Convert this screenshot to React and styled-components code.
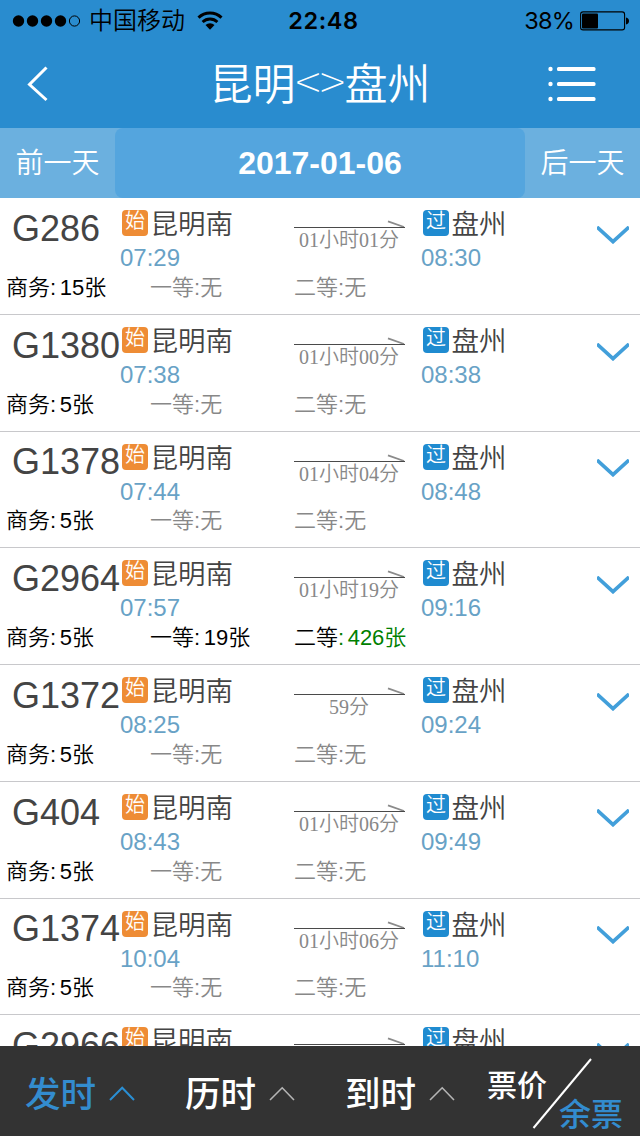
import React from 'react'
import styled, { createGlobalStyle } from 'styled-components'

const trains = [
  { no: 'G286', start: '07:29', end: '08:30', time: '01小时01分', business: '15' },
  { no: 'G1380', start: '07:38', end: '08:38', time: '01小时00分', business: '5' },
  { no: 'G1378', start: '07:44', end: '08:48', time: '01小时04分', business: '5' },
  { no: 'G2964', start: '07:57', end: '09:16', time: '01小时19分', business: '5', first: '19', second: '426' },
  { no: 'G1372', start: '08:25', end: '09:24', time: '59分', business: '5' },
  { no: 'G404', start: '08:43', end: '09:49', time: '01小时06分', business: '5' },
  { no: 'G1374', start: '10:04', end: '11:10', time: '01小时06分', business: '5' },
  { no: 'G2966' },
]

const Seat = ({ label, count, plenty }) => (
  <SeatCell $empty={!count}>
    {label}
    <SeatCount $plenty={plenty}>
      :{count ? <Num>{count}张</Num> : '无'}
    </SeatCount>
  </SeatCell>
)

const Train = ({ train }) => (
  <Row>
    <Trip>
      <TrainNo>{train.no}</TrainNo>
      <Stop $width={174}>
        <Station><Badge $color="#ee8c35">始</Badge>昆明南</Station>
        {train.start && <Time>{train.start}</Time>}
      </Stop>
      <Duration>
        <svg width="111" height="31" viewBox="0 0 111 31">
          <path d="M94 23.3L110 29" stroke="#8a8a8a" strokeWidth="1.8" fill="none" />
          <path d="M0 29.5H111" stroke="#4a4a4a" strokeWidth="1.2" />
        </svg>
        {train.time && <span>{train.time}</span>}
      </Duration>
      <Stop $width={176}>
        <Station><Badge $color="#1f8bd0">过</Badge>盘州</Station>
        {train.end && <Time>{train.end}</Time>}
      </Stop>
      <Expand width="32" height="18" viewBox="0 0 32 18">
        <path d="M0 1L16 15.7L32 1" stroke="#429fda" strokeWidth="3.6" fill="none" />
      </Expand>
    </Trip>
    {train.business && (
      <Seats>
        <Seat label="商务" count={train.business} />
        <Seat label="一等" count={train.first} />
        <Seat label="二等" count={train.second} plenty={!!train.second} />
      </Seats>
    )}
  </Row>
)

const SortTab = ({ text, active }) => (
  <Tab $active={active}>
    <span>{text}</span>
    <svg width="26" height="15" viewBox="0 0 26 15">
      <path d="M1 14L13.2 1.8L25 14" stroke={active ? '#2a8fd4' : '#b5b5b5'} strokeWidth={active ? 2 : 1.6} fill="none" />
    </svg>
  </Tab>
)

const App = () => (
  <Screen>
    <GlobalStyle />
    <StatusBar>
      <Carrier>
        <svg width="69" height="14" viewBox="0 0 69 14">
          <circle cx="6.5" cy="7" r="5.7" />
          <circle cx="20.5" cy="7" r="5.7" />
          <circle cx="34.5" cy="7" r="5.7" />
          <circle cx="48.5" cy="7" r="5.7" />
          <circle cx="62.5" cy="7" r="5.1" fill="none" stroke="#000" strokeWidth="1" />
        </svg>
        <span>中国移动</span>
        <svg width="26" height="20" viewBox="0 0 26 20">
          <path d="M1.5 6.6A16.5 16.5 0 0 1 24.5 6.6" stroke="#000" strokeWidth="3" fill="none" />
          <path d="M5.6 11A10.6 10.6 0 0 1 20.4 11" stroke="#000" strokeWidth="2.8" fill="none" />
          <path d="M8.5 14.1A6.4 6.4 0 0 1 17.5 14.1L13 18.8Z" />
        </svg>
      </Carrier>
      <Clock>22:48</Clock>
      <Battery>
        <span>38%</span>
        <svg width="50" height="20" viewBox="0 0 50 20">
          <rect x="0.6" y="0.9" width="44" height="18" rx="2.5" fill="none" stroke="#000" strokeWidth="1.1" />
          <rect x="2" y="2.5" width="16" height="15" rx="1" />
          <path d="M46 6.5Q49 7.3 49 10T46 13.5Z" />
        </svg>
      </Battery>
    </StatusBar>
    <NavBar>
      <svg width="22" height="36" viewBox="0 0 22 36">
        <path d="M19.5 1.5L2.5 18.5L19.5 34" stroke="#fff" strokeWidth="3" fill="none" />
      </svg>
      <Title>昆明<span>&lt;&gt;</span>盘州</Title>
      <svg width="48" height="36" viewBox="0 0 48 36">
        <g fill="#fff">
          <circle cx="2.5" cy="3" r="2.2" />
          <circle cx="2.5" cy="18" r="2.2" />
          <circle cx="2.5" cy="33" r="2.2" />
          <rect x="9" y="1" width="38.5" height="4" rx="1.5" />
          <rect x="9" y="16" width="38.5" height="4" rx="1.5" />
          <rect x="9" y="31" width="38.5" height="4" rx="1.5" />
        </g>
      </svg>
    </NavBar>
    <DateBar>
      <DayButton>前一天</DayButton>
      <DateButton>2017-01-06</DateButton>
      <DayButton>后一天</DayButton>
    </DateBar>
    <List>
      {trains.map((train) => <Train key={train.no} train={train} />)}
    </List>
    <Footer>
      <SortTab text="发时" active />
      <SortTab text="历时" />
      <SortTab text="到时" />
      <Toggle>
        <Price>票价</Price>
        <Slash width="62" height="74" viewBox="0 0 62 74">
          <path d="M1.5 72L59 3" stroke="#fff" strokeWidth="2" />
        </Slash>
        <Remain>余票</Remain>
      </Toggle>
    </Footer>
  </Screen>
)

const GlobalStyle = createGlobalStyle`
  body {
    margin: 0;
    font-family: "Liberation Sans", "Noto Sans CJK SC", sans-serif;
  }
  * {
    box-sizing: border-box;
  }
  svg {
    flex-shrink: 0;
  }
`

const Screen = styled.div`
  width: 640px;
  height: 1136px;
  display: flex;
  flex-direction: column;
  background: #fff;
  overflow: hidden;
`

const StatusBar = styled.div`
  height: 40px;
  padding: 0 10px 0 12px;
  display: grid;
  grid-template-columns: 1fr auto 1fr;
  align-items: center;
  background: #298ccf;
  color: #000;
  font-family: Inter, "Noto Sans CJK SC", sans-serif;
  font-size: 24px;
  line-height: 40px;
`

const Carrier = styled.div`
  display: flex;
  align-items: center;
  span {
    padding-top: 1px;
    margin: 0 12px 0 8px;
    font-weight: 350;
  }
`

const Clock = styled.div`
  padding: 1px 0 0 5px;
  font-size: 23.5px;
  font-weight: 600;
  letter-spacing: 0.6px;
`

const Battery = styled.div`
  display: flex;
  justify-content: flex-end;
  align-items: center;
  gap: 6px;
  span {
    padding-top: 1px;
    font-size: 23.5px;
    letter-spacing: -0.8px;
  }
`

const NavBar = styled.header`
  height: 88px;
  padding: 0 44px 0 27px;
  display: flex;
  align-items: center;
  background: #298ccf;
`

const Title = styled.h1`
  flex: 1;
  height: 88px;
  margin: 0;
  padding-left: 43px;
  color: #fff;
  font-family: "Noto Sans CJK SC", sans-serif;
  font-size: 43px;
  font-weight: 350;
  line-height: 82px;
  text-align: center;
  span {
    font-size: 48px;
    font-weight: 100;
    line-height: 1;
    letter-spacing: -0.5px;
  }
`

const DateBar = styled.div`
  height: 70px;
  display: flex;
  background: #6bb0df;
  color: #fff;
  line-height: 70px;
  text-align: center;
`

const DayButton = styled.div`
  width: 115px;
  padding-top: 1px;
  font-size: 28px;
  font-weight: 350;
`

const DateButton = styled.div`
  flex: 1;
  border-radius: 8px;
  background: #54a5de;
  font-size: 32px;
  font-weight: bold;
`

const List = styled.main`
  flex: 1;
  min-height: 0;
  padding-top: 0.3px;
  overflow: hidden;
`

const Row = styled.div`
  height: 116.72px;
  border-bottom: 1px solid #c8c8cb;
`

const Trip = styled.div`
  height: 73px;
  display: flex;
  align-items: flex-start;
`

const TrainNo = styled.div`
  width: 120px;
  margin-top: -0.3px;
  padding-left: 12px;
  color: #444;
  font-size: 36px;
  line-height: 61px;
  white-space: nowrap;
`

const Stop = styled.div`
  width: ${({ $width }) => $width}px;
  padding-top: 8px;
`

const Station = styled.div`
  height: 39px;
  padding-left: 2px;
  display: flex;
  gap: 2.5px;
  color: #444;
  font-size: 27.5px;
  font-weight: 350;
  line-height: 37px;
`

const Badge = styled.span`
  width: 26px;
  height: 26px;
  margin-top: 4px;
  border-radius: 4px;
  background: ${({ $color }) => $color};
  color: #fff;
  font-size: 20px;
  line-height: 23px;
  text-align: center;
`

const Time = styled.div`
  color: #68a2c6;
  font-size: 24px;
  line-height: 26px;
`

const Duration = styled.div`
  width: 111px;
  margin-right: 16px;
  display: flex;
  flex-direction: column;
  align-items: center;
  color: #888;
  font-family: "Liberation Serif", "Noto Sans CJK SC", serif;
  font-size: 20px;
  font-weight: 350;
  line-height: 22px;
  white-space: nowrap;
  span {
    padding-right: 1px;
  }
`

const Expand = styled.svg`
  margin-top: 27.6px;
`

const Seats = styled.div`
  margin-top: -0.3px;
  padding-left: 6px;
  display: flex;
`

const SeatCell = styled.div`
  width: 144px;
  color: ${({ $empty }) => ($empty ? '#888' : '#000')};
  font-size: 22px;
  font-weight: 350;
  line-height: 33px;
`

const SeatCount = styled.span`
  color: ${({ $plenty }) => ($plenty ? '#008000' : 'inherit')};
`

const Num = styled.span`
  margin-left: 3.5px;
`

const Footer = styled.footer`
  height: 90px;
  display: flex;
  background: #333;
`

const Tab = styled.div`
  width: 160px;
  padding: 4px 0 0 25px;
  display: flex;
  align-items: center;
  gap: 13px;
  color: ${({ $active }) => ($active ? '#338ccf' : '#fff')};
  font-size: 35.5px;
  font-weight: 500;
  span {
    padding-top: 3px;
    line-height: 82px;
  }
`

const Toggle = styled.div`
  position: relative;
  width: 160px;
  padding: 23px 17px 0 7px;
  display: flex;
  flex-direction: column;
  font-weight: 500;
`

const Price = styled.span`
  color: #fff;
  font-size: 30px;
  line-height: 34px;
`

const Slash = styled.svg`
  position: absolute;
  left: 52px;
  top: 10px;
`

const Remain = styled.span`
  align-self: flex-end;
  margin-top: -6px;
  color: #338ccf;
  font-size: 32px;
  line-height: 36px;
`

export default App
